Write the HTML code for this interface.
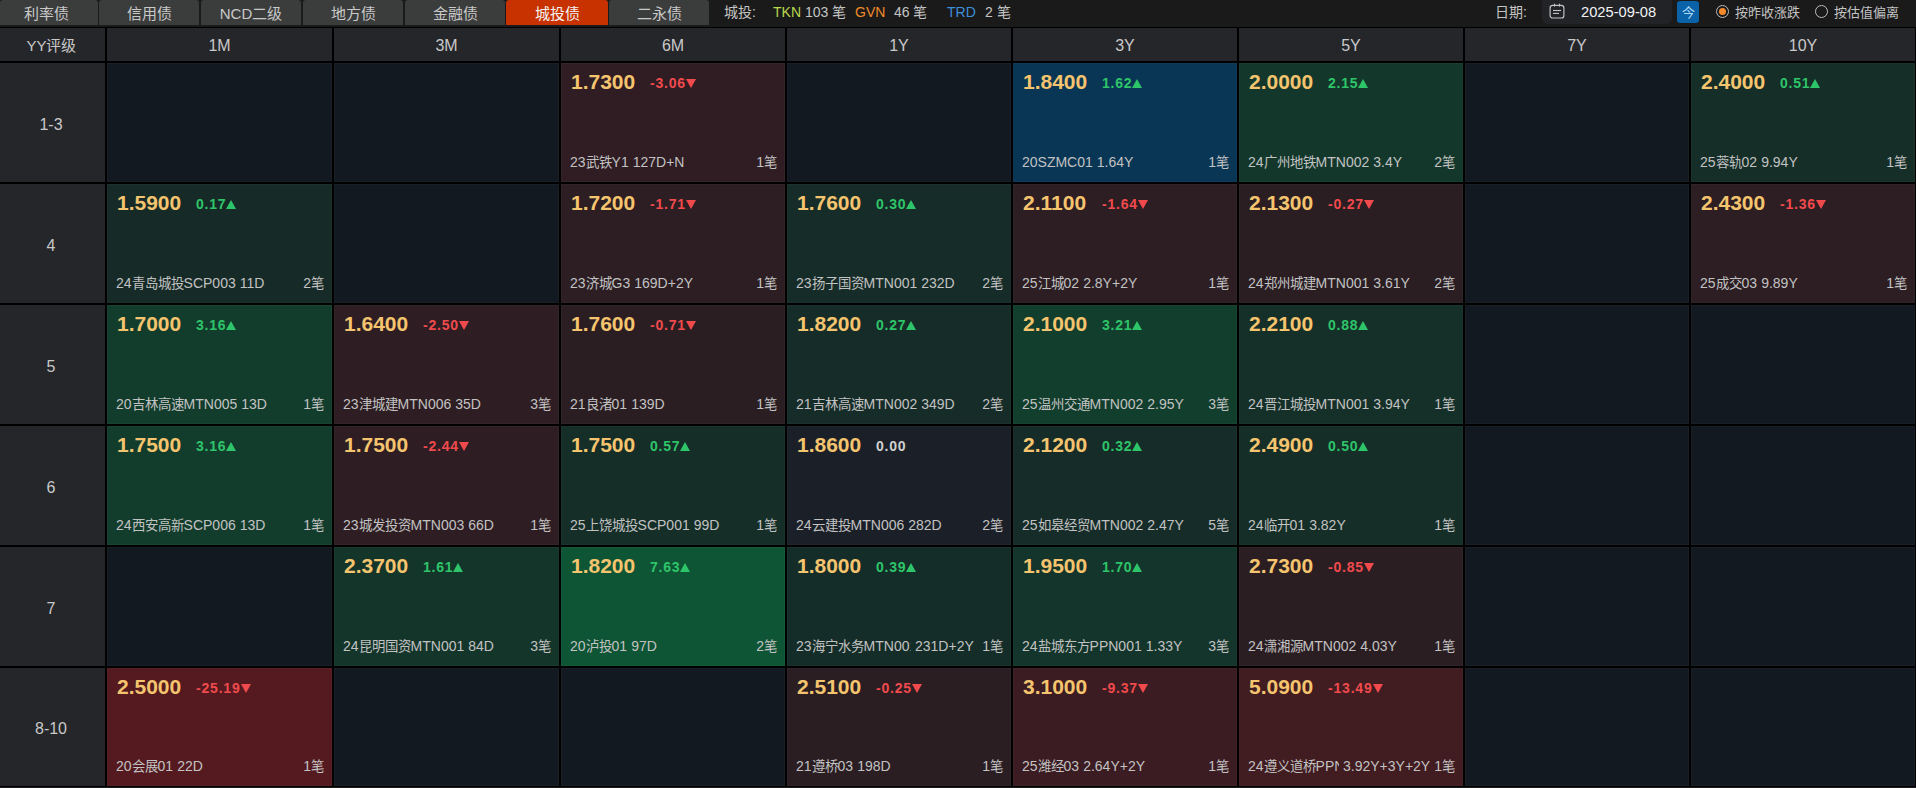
<!DOCTYPE html>
<html lang="zh-CN"><head><meta charset="utf-8"><title>城投债</title>
<style>
*{margin:0;padding:0;box-sizing:border-box}
html,body{width:1916px;height:788px;overflow:hidden;background:#000;font-family:"Liberation Sans",sans-serif;}
.a{position:absolute}
#top{left:0;top:0;width:1916px;height:27px;background:#1a1a1a}
.tab{position:absolute;top:0;height:25px;background:#3b3c3c;border-radius:3px 3px 0 0;color:#c9c9c9;font-size:15px;line-height:28px;text-align:center}
.tab.on{background:#c83200;color:#f2f2f2}
.hd{position:absolute;background:#25262a;color:#c9c9c9;font-size:16px;text-align:center}
.c{position:absolute;overflow:hidden;box-shadow:inset 0 0 0 1px rgba(255,255,255,0.028)}
.p{position:absolute;left:10px;top:6px;font-size:21px;font-weight:bold;color:#f5c46e;line-height:26px;white-space:nowrap}
.ch{position:absolute;top:10px;font-size:14px;font-weight:bold;line-height:20px;white-space:nowrap;letter-spacing:0.8px}
.tri{display:inline-block;width:0;height:0;border-left:5px solid transparent;border-right:5px solid transparent;margin-left:0;vertical-align:0px}
.tu{border-bottom:9px solid #2ec46a}.td{border-top:9px solid #f14a4c}
.u{color:#2ec46a}.d{color:#f14a4c}.n{color:#d0d0d0}
.bt{position:absolute;left:9px;right:8px;top:91px;height:16px;font-size:14px;line-height:16px;color:#c2c2c2;white-space:nowrap;display:flex}
.nm{overflow:hidden;flex:0 1 auto;min-width:0}
.tm{flex:0 0 auto;padding-left:4px}
.sp{flex:1 1 auto}
.z{font-size:13.4px}
.ct{flex:0 0 auto;padding-left:4px}
</style></head><body>

<div class="a" id="top"></div>
<div class="tab" style="left:0px;width:98px;padding-right:5px;">利率债</div>
<div class="tab" style="left:99px;width:100px;">信用债</div>
<div class="tab" style="left:201px;width:100px;">NCD二级</div>
<div class="tab" style="left:303px;width:100px;">地方债</div>
<div class="tab" style="left:405px;width:100px;">金融债</div>
<div class="tab on" style="left:506px;width:102px;">城投债</div>
<div class="tab" style="left:609px;width:100px;">二永债</div>
<div class="a" style="left:724px;top:0;height:25px;line-height:25px;font-size:14px;color:#c4c4c4;white-space:nowrap">城投:</div>
<div class="a" style="left:773px;top:0;height:25px;line-height:25px;font-size:14px;color:#b8d84c">TKN</div>
<div class="a" style="left:805px;top:0;height:25px;line-height:25px;font-size:14px;color:#c4c4c4;white-space:nowrap">103 笔</div>
<div class="a" style="left:855px;top:0;height:25px;line-height:25px;font-size:14px;color:#f08a2a">GVN</div>
<div class="a" style="left:894px;top:0;height:25px;line-height:25px;font-size:14px;color:#c4c4c4;white-space:nowrap">46 笔</div>
<div class="a" style="left:947px;top:0;height:25px;line-height:25px;font-size:14px;color:#3d8fda">TRD</div>
<div class="a" style="left:985px;top:0;height:25px;line-height:25px;font-size:14px;color:#c4c4c4;white-space:nowrap">2 笔</div>
<div class="a" style="left:1495px;top:0;height:25px;line-height:25px;font-size:14px;color:#c4c4c4;white-space:nowrap">日期:</div>
<div class="a" style="left:1542px;top:0;width:130px;height:24px;background:#212327;border-radius:0 0 6px 6px"></div>
<svg class="a" style="left:1549px;top:3px" width="16" height="16" viewBox="0 0 16 16"><rect x="1.1" y="2.4" width="13.8" height="12.6" rx="2.6" fill="none" stroke="#c4c4c4" stroke-width="1.15"/><line x1="5.5" y1="0.7" x2="5.5" y2="3.6" stroke="#c4c4c4" stroke-width="1.1"/><line x1="10.5" y1="0.7" x2="10.5" y2="3.6" stroke="#c4c4c4" stroke-width="1.1"/><line x1="4" y1="7.5" x2="12" y2="7.5" stroke="#c4c4c4" stroke-width="1.1"/><line x1="4" y1="10.4" x2="10" y2="10.4" stroke="#c4c4c4" stroke-width="1.1"/></svg>
<div class="a" style="left:1581px;top:0;height:24px;line-height:24px;font-size:14.7px;color:#f2f2f2;white-space:nowrap">2025-09-08</div>
<div class="a" style="left:1677px;top:1px;width:22px;height:22px;background:#0a62a9;border-radius:3px;color:#b0dcf8;font-size:13px;line-height:24px;text-align:center">今</div>
<div class="a" style="left:1716px;top:5px;width:13px;height:13px;border:1.5px solid #bdbdbd;border-radius:50%"></div>
<div class="a" style="left:1719px;top:8px;width:7px;height:7px;background:#f58a2d;border-radius:50%"></div>
<div class="a" style="left:1735px;top:0;height:25px;line-height:25px;font-size:13px;color:#c4c4c4;white-space:nowrap">按昨收涨跌</div>
<div class="a" style="left:1815px;top:5px;width:13px;height:13px;border:1.5px solid #bdbdbd;border-radius:50%"></div>
<div class="a" style="left:1834px;top:0;height:25px;line-height:25px;font-size:13px;color:#c4c4c4;white-space:nowrap">按估值偏离</div>
<div class="hd" style="left:0;top:28px;width:105px;padding-right:2px;height:33px;line-height:35px;font-size:15px">YY评级</div>
<div class="hd" style="left:107px;top:28px;width:225px;height:33px;line-height:35px">1M</div>
<div class="hd" style="left:334px;top:28px;width:225px;height:33px;line-height:35px">3M</div>
<div class="hd" style="left:561px;top:28px;width:224px;height:33px;line-height:35px">6M</div>
<div class="hd" style="left:787px;top:28px;width:224px;height:33px;line-height:35px">1Y</div>
<div class="hd" style="left:1013px;top:28px;width:224px;height:33px;line-height:35px">3Y</div>
<div class="hd" style="left:1239px;top:28px;width:224px;height:33px;line-height:35px">5Y</div>
<div class="hd" style="left:1465px;top:28px;width:224px;height:33px;line-height:35px">7Y</div>
<div class="hd" style="left:1691px;top:28px;width:224px;height:33px;line-height:35px">10Y</div>
<div class="hd" style="left:0;top:63px;width:105px;padding-right:3px;height:119px;line-height:123px">1-3</div>
<div class="hd" style="left:0;top:184px;width:105px;padding-right:3px;height:119px;line-height:123px">4</div>
<div class="hd" style="left:0;top:305px;width:105px;padding-right:3px;height:119px;line-height:123px">5</div>
<div class="hd" style="left:0;top:426px;width:105px;padding-right:3px;height:119px;line-height:123px">6</div>
<div class="hd" style="left:0;top:547px;width:105px;padding-right:3px;height:119px;line-height:123px">7</div>
<div class="hd" style="left:0;top:668px;width:105px;padding-right:3px;height:118px;line-height:122px">8-10</div>
<div class="c" style="left:107px;top:63px;width:225px;height:119px;background:#121920"></div>
<div class="c" style="left:334px;top:63px;width:225px;height:119px;background:#121920"></div>
<div class="c" style="left:561px;top:63px;width:224px;height:119px;background:#2f1d23"><div class="p">1.7300</div><div class="ch d" style="left:89px">-3.06<i class="tri td"></i></div><div class="bt"><span class="nm">23<span class="z">武铁</span>Y1</span><span class="tm">127D+N</span><span class="sp"></span><span class="ct">1<span class="z">笔</span></span></div></div>
<div class="c" style="left:787px;top:63px;width:224px;height:119px;background:#121920"></div>
<div class="c" style="left:1013px;top:63px;width:224px;height:119px;background:#093654"><div class="p">1.8400</div><div class="ch u" style="left:89px">1.62<i class="tri tu"></i></div><div class="bt"><span class="nm">20SZMC01</span><span class="tm">1.64Y</span><span class="sp"></span><span class="ct">1<span class="z">笔</span></span></div></div>
<div class="c" style="left:1239px;top:63px;width:224px;height:119px;background:#13382b"><div class="p">2.0000</div><div class="ch u" style="left:89px">2.15<i class="tri tu"></i></div><div class="bt"><span class="nm">24<span class="z">广州地铁</span>MTN002</span><span class="tm">3.4Y</span><span class="sp"></span><span class="ct">2<span class="z">笔</span></span></div></div>
<div class="c" style="left:1465px;top:63px;width:224px;height:119px;background:#121920"></div>
<div class="c" style="left:1691px;top:63px;width:224px;height:119px;background:#152e28"><div class="p">2.4000</div><div class="ch u" style="left:89px">0.51<i class="tri tu"></i></div><div class="bt"><span class="nm">25<span class="z">蓉轨</span>02</span><span class="tm">9.94Y</span><span class="sp"></span><span class="ct">1<span class="z">笔</span></span></div></div>
<div class="c" style="left:107px;top:184px;width:225px;height:119px;background:#162b27"><div class="p">1.5900</div><div class="ch u" style="left:89px">0.17<i class="tri tu"></i></div><div class="bt"><span class="nm">24<span class="z">青岛城投</span>SCP003</span><span class="tm">11D</span><span class="sp"></span><span class="ct">2<span class="z">笔</span></span></div></div>
<div class="c" style="left:334px;top:184px;width:225px;height:119px;background:#121920"></div>
<div class="c" style="left:561px;top:184px;width:224px;height:119px;background:#2c1e23"><div class="p">1.7200</div><div class="ch d" style="left:89px">-1.71<i class="tri td"></i></div><div class="bt"><span class="nm">23<span class="z">济城</span>G3</span><span class="tm">169D+2Y</span><span class="sp"></span><span class="ct">1<span class="z">笔</span></span></div></div>
<div class="c" style="left:787px;top:184px;width:224px;height:119px;background:#162c28"><div class="p">1.7600</div><div class="ch u" style="left:89px">0.30<i class="tri tu"></i></div><div class="bt"><span class="nm">23<span class="z">扬子国资</span>MTN001</span><span class="tm">232D</span><span class="sp"></span><span class="ct">2<span class="z">笔</span></span></div></div>
<div class="c" style="left:1013px;top:184px;width:224px;height:119px;background:#2c1e23"><div class="p">2.1100</div><div class="ch d" style="left:89px">-1.64<i class="tri td"></i></div><div class="bt"><span class="nm">25<span class="z">江城</span>02</span><span class="tm">2.8Y+2Y</span><span class="sp"></span><span class="ct">1<span class="z">笔</span></span></div></div>
<div class="c" style="left:1239px;top:184px;width:224px;height:119px;background:#2a1e23"><div class="p">2.1300</div><div class="ch d" style="left:89px">-0.27<i class="tri td"></i></div><div class="bt"><span class="nm">24<span class="z">郑州城建</span>MTN001</span><span class="tm">3.61Y</span><span class="sp"></span><span class="ct">2<span class="z">笔</span></span></div></div>
<div class="c" style="left:1465px;top:184px;width:224px;height:119px;background:#121920"></div>
<div class="c" style="left:1691px;top:184px;width:224px;height:119px;background:#2c1e23"><div class="p">2.4300</div><div class="ch d" style="left:89px">-1.36<i class="tri td"></i></div><div class="bt"><span class="nm">25<span class="z">成交</span>03</span><span class="tm">9.89Y</span><span class="sp"></span><span class="ct">1<span class="z">笔</span></span></div></div>
<div class="c" style="left:107px;top:305px;width:225px;height:119px;background:#123d2d"><div class="p">1.7000</div><div class="ch u" style="left:89px">3.16<i class="tri tu"></i></div><div class="bt"><span class="nm">20<span class="z">吉林高速</span>MTN005</span><span class="tm">13D</span><span class="sp"></span><span class="ct">1<span class="z">笔</span></span></div></div>
<div class="c" style="left:334px;top:305px;width:225px;height:119px;background:#2e1e23"><div class="p">1.6400</div><div class="ch d" style="left:89px">-2.50<i class="tri td"></i></div><div class="bt"><span class="nm">23<span class="z">津城建</span>MTN006</span><span class="tm">35D</span><span class="sp"></span><span class="ct">3<span class="z">笔</span></span></div></div>
<div class="c" style="left:561px;top:305px;width:224px;height:119px;background:#2a1e23"><div class="p">1.7600</div><div class="ch d" style="left:89px">-0.71<i class="tri td"></i></div><div class="bt"><span class="nm">21<span class="z">良渚</span>01</span><span class="tm">139D</span><span class="sp"></span><span class="ct">1<span class="z">笔</span></span></div></div>
<div class="c" style="left:787px;top:305px;width:224px;height:119px;background:#162c28"><div class="p">1.8200</div><div class="ch u" style="left:89px">0.27<i class="tri tu"></i></div><div class="bt"><span class="nm">21<span class="z">吉林高速</span>MTN002</span><span class="tm">349D</span><span class="sp"></span><span class="ct">2<span class="z">笔</span></span></div></div>
<div class="c" style="left:1013px;top:305px;width:224px;height:119px;background:#123e2d"><div class="p">2.1000</div><div class="ch u" style="left:89px">3.21<i class="tri tu"></i></div><div class="bt"><span class="nm">25<span class="z">温州交通</span>MTN002</span><span class="tm">2.95Y</span><span class="sp"></span><span class="ct">3<span class="z">笔</span></span></div></div>
<div class="c" style="left:1239px;top:305px;width:224px;height:119px;background:#153029"><div class="p">2.2100</div><div class="ch u" style="left:89px">0.88<i class="tri tu"></i></div><div class="bt"><span class="nm">24<span class="z">晋江城投</span>MTN001</span><span class="tm">3.94Y</span><span class="sp"></span><span class="ct">1<span class="z">笔</span></span></div></div>
<div class="c" style="left:1465px;top:305px;width:224px;height:119px;background:#121920"></div>
<div class="c" style="left:1691px;top:305px;width:224px;height:119px;background:#121920"></div>
<div class="c" style="left:107px;top:426px;width:225px;height:119px;background:#123d2d"><div class="p">1.7500</div><div class="ch u" style="left:89px">3.16<i class="tri tu"></i></div><div class="bt"><span class="nm">24<span class="z">西安高新</span>SCP006</span><span class="tm">13D</span><span class="sp"></span><span class="ct">1<span class="z">笔</span></span></div></div>
<div class="c" style="left:334px;top:426px;width:225px;height:119px;background:#2e1e23"><div class="p">1.7500</div><div class="ch d" style="left:89px">-2.44<i class="tri td"></i></div><div class="bt"><span class="nm">23<span class="z">城发投资</span>MTN003</span><span class="tm">66D</span><span class="sp"></span><span class="ct">1<span class="z">笔</span></span></div></div>
<div class="c" style="left:561px;top:426px;width:224px;height:119px;background:#152e28"><div class="p">1.7500</div><div class="ch u" style="left:89px">0.57<i class="tri tu"></i></div><div class="bt"><span class="nm">25<span class="z">上饶城投</span>SCP001</span><span class="tm">99D</span><span class="sp"></span><span class="ct">1<span class="z">笔</span></span></div></div>
<div class="c" style="left:787px;top:426px;width:224px;height:119px;background:#1b2028"><div class="p">1.8600</div><div class="ch n" style="left:89px">0.00</div><div class="bt"><span class="nm">24<span class="z">云建投</span>MTN006</span><span class="tm">282D</span><span class="sp"></span><span class="ct">2<span class="z">笔</span></span></div></div>
<div class="c" style="left:1013px;top:426px;width:224px;height:119px;background:#162c28"><div class="p">2.1200</div><div class="ch u" style="left:89px">0.32<i class="tri tu"></i></div><div class="bt"><span class="nm">25<span class="z">如皋经贸</span>MTN002</span><span class="tm">2.47Y</span><span class="sp"></span><span class="ct">5<span class="z">笔</span></span></div></div>
<div class="c" style="left:1239px;top:426px;width:224px;height:119px;background:#152e28"><div class="p">2.4900</div><div class="ch u" style="left:89px">0.50<i class="tri tu"></i></div><div class="bt"><span class="nm">24<span class="z">临开</span>01</span><span class="tm">3.82Y</span><span class="sp"></span><span class="ct">1<span class="z">笔</span></span></div></div>
<div class="c" style="left:1465px;top:426px;width:224px;height:119px;background:#121920"></div>
<div class="c" style="left:1691px;top:426px;width:224px;height:119px;background:#121920"></div>
<div class="c" style="left:107px;top:547px;width:225px;height:119px;background:#121920"></div>
<div class="c" style="left:334px;top:547px;width:225px;height:119px;background:#14352a"><div class="p">2.3700</div><div class="ch u" style="left:89px">1.61<i class="tri tu"></i></div><div class="bt"><span class="nm">24<span class="z">昆明国资</span>MTN001</span><span class="tm">84D</span><span class="sp"></span><span class="ct">3<span class="z">笔</span></span></div></div>
<div class="c" style="left:561px;top:547px;width:224px;height:119px;background:#0e5535"><div class="p">1.8200</div><div class="ch u" style="left:89px">7.63<i class="tri tu"></i></div><div class="bt"><span class="nm">20<span class="z">泸投</span>01</span><span class="tm">97D</span><span class="sp"></span><span class="ct">2<span class="z">笔</span></span></div></div>
<div class="c" style="left:787px;top:547px;width:224px;height:119px;background:#152d28"><div class="p">1.8000</div><div class="ch u" style="left:89px">0.39<i class="tri tu"></i></div><div class="bt"><span class="nm" style="max-width:115px">23<span class="z">海宁水务</span>MTN001</span><span class="tm">231D+2Y</span><span class="sp"></span><span class="ct">1<span class="z">笔</span></span></div></div>
<div class="c" style="left:1013px;top:547px;width:224px;height:119px;background:#14352b"><div class="p">1.9500</div><div class="ch u" style="left:89px">1.70<i class="tri tu"></i></div><div class="bt"><span class="nm">24<span class="z">盐城东方</span>PPN001</span><span class="tm">1.33Y</span><span class="sp"></span><span class="ct">3<span class="z">笔</span></span></div></div>
<div class="c" style="left:1239px;top:547px;width:224px;height:119px;background:#2b1e23"><div class="p">2.7300</div><div class="ch d" style="left:89px">-0.85<i class="tri td"></i></div><div class="bt"><span class="nm">24<span class="z">潇湘源</span>MTN002</span><span class="tm">4.03Y</span><span class="sp"></span><span class="ct">1<span class="z">笔</span></span></div></div>
<div class="c" style="left:1465px;top:547px;width:224px;height:119px;background:#121920"></div>
<div class="c" style="left:1691px;top:547px;width:224px;height:119px;background:#121920"></div>
<div class="c" style="left:107px;top:668px;width:225px;height:118px;background:#541a20"><div class="p">2.5000</div><div class="ch d" style="left:89px">-25.19<i class="tri td"></i></div><div class="bt" style="top:90px"><span class="nm">20<span class="z">会展</span>01</span><span class="tm">22D</span><span class="sp"></span><span class="ct">1<span class="z">笔</span></span></div></div>
<div class="c" style="left:334px;top:668px;width:225px;height:118px;background:#121920"></div>
<div class="c" style="left:561px;top:668px;width:224px;height:118px;background:#121920"></div>
<div class="c" style="left:787px;top:668px;width:224px;height:118px;background:#2a1e23"><div class="p">2.5100</div><div class="ch d" style="left:89px">-0.25<i class="tri td"></i></div><div class="bt" style="top:90px"><span class="nm">21<span class="z">遵桥</span>03</span><span class="tm">198D</span><span class="sp"></span><span class="ct">1<span class="z">笔</span></span></div></div>
<div class="c" style="left:1013px;top:668px;width:224px;height:118px;background:#3a1c22"><div class="p">3.1000</div><div class="ch d" style="left:89px">-9.37<i class="tri td"></i></div><div class="bt" style="top:90px"><span class="nm">25<span class="z">潍经</span>03</span><span class="tm">2.64Y+2Y</span><span class="sp"></span><span class="ct">1<span class="z">笔</span></span></div></div>
<div class="c" style="left:1239px;top:668px;width:224px;height:118px;background:#411c21"><div class="p">5.0900</div><div class="ch d" style="left:89px">-13.49<i class="tri td"></i></div><div class="bt" style="top:90px"><span class="nm">24<span class="z">遵义道桥</span>PPN001</span><span class="tm">3.92Y+3Y+2Y</span><span class="sp"></span><span class="ct">1<span class="z">笔</span></span></div></div>
<div class="c" style="left:1465px;top:668px;width:224px;height:118px;background:#121920"></div>
<div class="c" style="left:1691px;top:668px;width:224px;height:118px;background:#121920"></div>
<div class="a" style="left:0;top:787px;width:1916px;height:1px;background:#1e1e1e"></div>
</body></html>
